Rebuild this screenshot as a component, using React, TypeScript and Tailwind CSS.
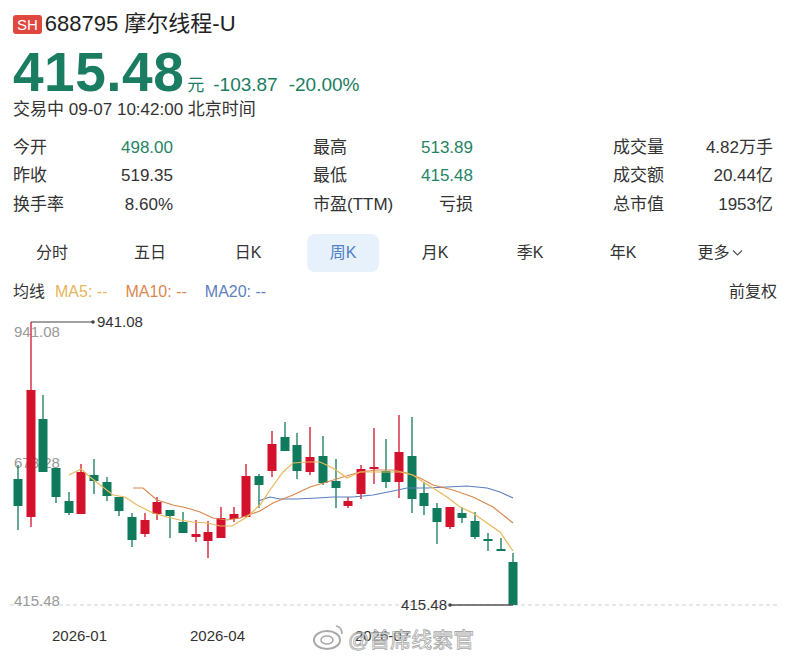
import * as React from "react"

const UP = "#d3112c"
const DOWN = "#0f7a5c"

// [x, wickTop, wickBottom, bodyTop, bodyBottom, up]
const candles: [number, number, number, number, number, boolean][] = [
  [18, 465, 530, 479, 506, false],
  [31, 322, 527, 390, 517, true],
  [43, 395, 472, 419, 472, false],
  [56, 468, 503, 468, 497, false],
  [69, 492, 515, 501, 513, false],
  [81, 464, 514, 472, 514, true],
  [94, 459, 494, 475, 481, false],
  [107, 477, 501, 482, 496, false],
  [119, 497, 516, 497, 511, false],
  [132, 513, 547, 517, 540, false],
  [145, 513, 537, 520, 534, true],
  [157, 497, 520, 502, 514, true],
  [170, 510, 538, 510, 516, false],
  [183, 512, 533, 522, 533, false],
  [196, 520, 542, 534, 537, true],
  [208, 521, 558, 532, 541, true],
  [221, 507, 538, 518, 538, true],
  [234, 507, 522, 514, 519, true],
  [246, 464, 517, 476, 517, true],
  [259, 474, 508, 476, 485, false],
  [272, 431, 477, 444, 471, true],
  [285, 422, 451, 437, 451, false],
  [297, 433, 479, 445, 471, false],
  [310, 427, 475, 457, 472, true],
  [323, 436, 485, 456, 483, false],
  [336, 459, 508, 481, 488, false],
  [348, 497, 508, 501, 506, true],
  [361, 465, 499, 469, 494, true],
  [374, 428, 484, 467, 469, true],
  [386, 439, 488, 471, 482, false],
  [399, 415, 498, 452, 482, true],
  [412, 417, 513, 456, 499, false],
  [424, 482, 515, 493, 506, false],
  [437, 503, 544, 508, 522, false],
  [450, 507, 529, 507, 527, true],
  [462, 507, 523, 513, 518, false],
  [475, 512, 539, 521, 537, false],
  [488, 533, 551, 539, 541, false],
  [501, 538, 550, 549, 551, false],
  [513, 553, 605, 562, 605, false],
]

const ma5 =
  "69,475 81,469 90,477 113,495 125,497 137,505 153,513 167,517 180,520 193,522 207,523 220,526 232,526 247,517 260,505 270,490 283,472 293,463 307,462 320,462 333,468 347,478 360,472 373,472 387,472 400,472 413,475 423,482 433,488 447,497 460,507 473,513 487,523 500,532 513,551"
const ma10 =
  "133,488 143,488 157,500 173,505 187,508 200,512 213,518 227,520 240,518 260,511 273,503 293,495 310,487 327,482 343,477 360,472 377,470 393,470 407,473 420,478 433,485 453,490 473,497 493,507 513,523"
const ma20 =
  "258,501 270,497 280,499 297,499 317,498 333,497 353,497 373,495 393,491 407,488 427,488 447,487 467,486 487,488 500,492 513,498"

const stats = [
  [["今开", "498.00", true], ["最高", "513.89", true], ["成交量", "4.82万手", false]],
  [["昨收", "519.35", false], ["最低", "415.48", true], ["成交额", "20.44亿", false]],
  [["换手率", "8.60%", false], ["市盈(TTM)", "亏损", false], ["总市值", "1953亿", false]],
] as const

const tabs = ["分时", "五日", "日K", "周K", "月K", "季K", "年K", "更多"]

function Chart() {
  return (
    <svg width={790} height={353} viewBox="0 304 790 353" className="block">
      <line x1={10} y1={605} x2={780} y2={605} stroke="#d4d0d0" strokeDasharray="4 3" />
      <text x={14} y={337} fontSize={15} fill="#999">941.08</text>
      <text x={14} y={468} fontSize={15} fill="#999">678.28</text>
      <text x={14} y={606} fontSize={15} fill="#999">415.48</text>

      {candles.map(([x, wt, wb, bt, bb, up], i) => (
        <g key={i}>
          <line x1={x} y1={wt} x2={x} y2={wb} stroke={up ? UP : DOWN} strokeWidth={1.3} />
          <rect
            x={x - 4.5}
            y={bt}
            width={9}
            height={Math.max(bb - bt, 1.5)}
            fill={up ? UP : DOWN}
          />
        </g>
      ))}

      <polyline points={ma20} fill="none" stroke="#5b7fc0" strokeWidth={1.2} />
      <polyline points={ma10} fill="none" stroke="#d9884f" strokeWidth={1.2} />
      <polyline points={ma5} fill="none" stroke="#e8b85a" strokeWidth={1.2} />

      <line x1={31} y1={322} x2={93} y2={322} stroke="#444" strokeWidth={1.2} />
      <circle cx={93} cy={322} r={1.8} fill="#444" />
      <text x={97} y={327} fontSize={15} fill="#333">941.08</text>

      <line x1={450} y1={605} x2={513} y2={605} stroke="#555" strokeWidth={1.5} />
      <circle cx={450} cy={605} r={1.8} fill="#444" />
      <text x={447} y={610} fontSize={15} fill="#333" textAnchor="end">415.48</text>

      <text x={52} y={641} fontSize={15} fill="#333">2026-01</text>
      <text x={190} y={641} fontSize={15} fill="#333">2026-04</text>
      <text x={355} y={641} fontSize={15} fill="#333">2026-07</text>

      <g opacity={0.85}>
        <ellipse cx={327} cy={640} rx={13} ry={9} fill="none" stroke="#999" strokeWidth={2} />
        <ellipse cx={327} cy={640} rx={6} ry={4} fill="none" stroke="#999" strokeWidth={1.5} />
        <path d="M336 626 q6 1 6 8" fill="none" stroke="#999" strokeWidth={1.6} />
        <text
          x={348}
          y={647}
          fontSize={21}
          fill="#fff"
          stroke="#9a9a9a"
          strokeWidth={0.8}
          fontFamily="'Liberation Sans','Noto Sans CJK SC',sans-serif"
        >
          @首席线索官
        </text>
      </g>
    </svg>
  )
}

export default function App() {
  return (
    <div
      className="h-[657px] w-[790px] overflow-hidden bg-white text-[#333]"
      style={{ fontFamily: "'Liberation Sans','Noto Sans CJK SC',sans-serif" }}
    >
      <div className="px-[13px]">
        <div className="mt-[12px] flex h-[24px] items-center gap-[3px]">
          <span className="h-[19px] rounded-[3px] bg-[#e0473f] px-[4px] text-[15px] leading-[19px] text-white">
            SH
          </span>
          <span className="text-[22px] leading-[24px] text-[#222]">688795 摩尔线程-U</span>
        </div>

        <div className="mt-[9px] flex h-[55px] items-baseline leading-none text-[#1a7d61]">
          <span className="text-[55px] font-bold tracking-[0.5px]">415.48</span>
          <span className="ml-[3px] text-[17px]">元</span>
          <span className="ml-[9px] text-[19px]">-103.87</span>
          <span className="ml-[11px] text-[19px]">-20.00%</span>
        </div>

        <div className="h-[20px] text-[17px] leading-[20px] text-[#333]">
          交易中 09-07 10:42:00 北京时间
        </div>

        <div className="mt-[13px]">
          {stats.map((row, r) => (
            <div key={r} className="grid h-[28.5px] grid-cols-[160px_160px_160px] items-center gap-x-[140px] text-[17px]">
              {row.map(([label, value, green]) => (
                <div key={label} className="flex items-center justify-between">
                  <span className="text-[#333]">{label}</span>
                  <span className={green ? "text-[#1f8565]" : "text-[#333]"}>{value}</span>
                </div>
              ))}
            </div>
          ))}
        </div>
      </div>

      <div className="ml-[5px] mt-[15px] grid h-[38px] grid-cols-[94px_102px_94px_96px_88px_102px_84px_110px] text-[16px]">
        {tabs.map((t) => (
          <div key={t} className="flex items-center justify-center">
            {t === "周K" ? (
              <span className="flex h-[38px] w-[72px] items-center justify-center rounded-[8px] bg-[#e7f1fc] text-[#4f7fc4]">
                {t}
              </span>
            ) : t === "更多" ? (
              <span className="flex items-center gap-[2px] text-[#333]">
                更多
                <svg width="11" height="8" viewBox="0 0 11 8">
                  <path d="M1 1.5 L5.5 6 L10 1.5" fill="none" stroke="#555" strokeWidth="1.2" />
                </svg>
              </span>
            ) : (
              <span className="text-[#333]">{t}</span>
            )}
          </div>
        ))}
      </div>

      <div className="mt-[8px] flex h-[24px] items-center px-[13px] text-[16px]">
        <span className="text-[#333]">均线</span>
        <span className="ml-[10px] text-[#e6b55c]">MA5: --</span>
        <span className="ml-[18px] text-[#d9884f]">MA10: --</span>
        <span className="ml-[18px] text-[#5b7fc0]">MA20: --</span>
        <span className="ml-auto text-[#333]">前复权</span>
      </div>

      <Chart />
    </div>
  )
}
